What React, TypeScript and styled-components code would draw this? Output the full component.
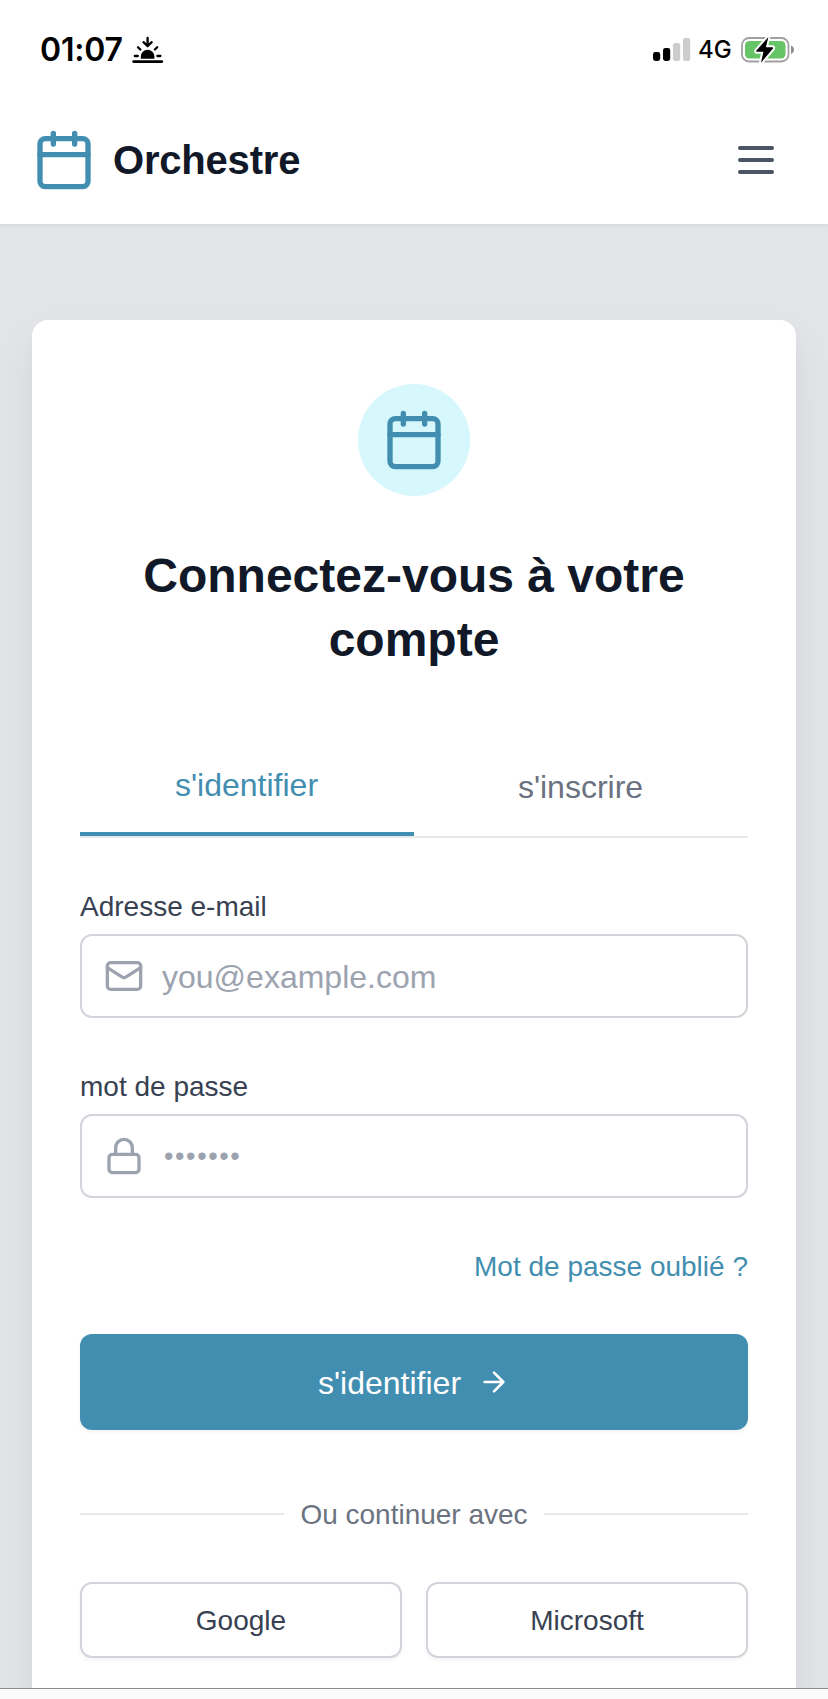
import React from "react";
import styled, { createGlobalStyle } from "styled-components";

const GlobalStyle = createGlobalStyle`
  *, *::before, *::after { box-sizing: border-box; }
  body {
    margin: 0;
    background: #e3e4e8;
    font-family: "Liberation Sans", Arial, sans-serif;
    color: #111827;
  }
  h1, label { margin: 0; }
  button, input { font-family: inherit; }
`;

const brand = "#428eb0";

const Screen = styled.div`
  display: flex;
  flex-direction: column;
  width: 828px;
  height: 1699px;
  overflow: hidden;
`;

const StatusBar = styled.div`
  display: flex;
  justify-content: space-between;
  height: 96px;
  padding: 30px 33px 26px 39px;
  background: #fff;
  color: #000;
  font-family: Inter, sans-serif;
`;

const StatusGroup = styled.div`
  display: flex;
  align-items: center;
  height: 40px;
`;

const Clock = styled.span`
  width: 93px;
  padding-left: 1px;
  font-size: 32px;
  font-weight: 600;
  line-height: 40px;
  letter-spacing: -0.2px;
  white-space: nowrap;
`;

const Network = styled.span`
  width: 43px;
  margin-left: 7px;
  font-size: 24px;
  font-weight: 500;
  line-height: 40px;
  white-space: nowrap;
`;

const Header = styled.header`
  position: relative;
  z-index: 1;
  display: flex;
  align-items: center;
  justify-content: space-between;
  height: 128px;
  flex: none;
  padding: 0 48px 0 32px;
  background: #fff;
  box-shadow: 0 2px 4px rgba(0, 0, 0, 0.05);
`;

const Brand = styled.div`
  display: flex;
  align-items: center;
  gap: 17px;
  font-size: 40px;
  font-weight: 700;
  line-height: 56px;
  letter-spacing: -0.2px;
`;

const MenuButton = styled.button`
  display: flex;
  padding: 0;
  border: 0;
  background: none;
  color: #4b5563;
`;

const Page = styled.main`
  flex: 1;
  min-height: 0;
  overflow: hidden;
  padding: 96px 32px 0;
`;

const Card = styled.section`
  height: 1500px;
  padding: 64px 48px;
  border-radius: 16px;
  background: #fff;
  box-shadow: 0 20px 50px -6px rgba(0, 0, 0, 0.08), 0 8px 20px -4px rgba(0, 0, 0, 0.03);
`;

const Emblem = styled.div`
  display: flex;
  align-items: center;
  justify-content: center;
  width: 112px;
  height: 112px;
  margin: 0 auto 48px;
  border-radius: 50%;
  background: #d6f8fd;
`;

const Title = styled.h1`
  font-size: 48px;
  font-weight: 700;
  line-height: 64px;
  text-align: center;
`;

const Tabs = styled.div`
  display: flex;
  margin: 64px 0 48px;
  border-bottom: 2px solid #e5e7eb;
`;

const Tab = styled.button<{ $active?: boolean }>`
  flex: 1;
  padding: 25px 1px 23px 0;
  border: 0;
  border-bottom: ${(p) => (p.$active ? `4px solid ${brand}` : "0")};
  background: none;
  color: ${(p) => (p.$active ? brand : "#6b7280")};
  font-size: 32px;
  line-height: 48px;
`;

const Field = styled.div`
  display: flex;
  flex-direction: column;
  gap: 7px;
  margin-bottom: 48px;
`;

const Label = styled.label`
  padding-top: 1px;
  color: #374151;
  font-size: 28px;
  line-height: 40px;
`;

const InputBox = styled.div`
  display: flex;
  align-items: center;
  gap: 18px;
  height: 84px;
  padding: 0 22px;
  border: 2px solid #d1d5db;
  border-radius: 12px;
  color: #9ca3af;
`;

const Input = styled.input`
  flex: 1;
  min-width: 0;
  height: 50px;
  padding: 2px 0 0;
  border: 0;
  outline: 0;
  background: none;
  color: #111827;
  font-size: 32px;

  &::placeholder {
    color: #9ca3af;
    opacity: 1;
  }
`;

const PasswordInput = styled(Input)`
  padding: 0 0 3px 2px;

  &::placeholder {
    font-size: 27px;
    letter-spacing: 1.6px;
  }
`;

const Forgot = styled.a`
  display: block;
  margin-bottom: 47px;
  padding-top: 1px;
  color: ${brand};
  font-size: 28px;
  line-height: 40px;
  text-align: right;
`;

const Submit = styled.button`
  display: flex;
  align-items: center;
  justify-content: center;
  gap: 17px;
  width: 100%;
  height: 96px;
  padding: 0;
  border: 0;
  border-radius: 12px;
  background: ${brand};
  box-shadow: 0 2px 4px rgba(0, 0, 0, 0.05);
  color: #fff;
  font-size: 32px;
  line-height: 48px;
`;

const SubmitText = styled.span`
  padding-top: 2px;
`;

const Divider = styled.div`
  display: flex;
  align-items: center;
  gap: 16px;
  height: 40px;
  margin: 64px 0 48px;
  color: #6b7280;
  font-size: 28px;

  &::before,
  &::after {
    content: "";
    flex: 1;
    height: 2px;
    background: #e5e7eb;
  }
`;

const DividerText = styled.span`
  padding-top: 2px;
  line-height: 38px;
`;

const Providers = styled.div`
  display: grid;
  grid-template-columns: 1fr 1fr;
  gap: 24px;
`;

const ProviderButton = styled.button`
  height: 76px;
  padding: 2px 0 0;
  border: 2px solid #d1d5db;
  border-radius: 12px;
  background: #fff;
  box-shadow: 0 2px 4px rgba(0, 0, 0, 0.05);
  color: #374151;
  font-size: 28px;
  line-height: 40px;
`;

const BrowserEdge = styled.footer`
  flex: none;
  height: 11px;
  border-top: 1px solid #8e8e91;
  background: #fbfbfb;
`;

const StrokeIcon = styled.svg`
  flex: none;
  display: block;
  fill: none;
  stroke: currentColor;
  stroke-width: 2;
  stroke-linecap: round;
  stroke-linejoin: round;
`;

const Glyph = styled.svg`
  flex: none;
  display: block;
`;

const CalendarIcon = () => (
  <StrokeIcon width="64" height="64" viewBox="0 0 24 24" color={brand}>
    <path d="M8 2v4M16 2v4M3 10h18" />
    <rect x="3" y="4" width="18" height="18" rx="2" />
  </StrokeIcon>
);

const SunsetGlyph = () => (
  <Glyph width="32" height="28" viewBox="0 0 32 28">
    <g fill="none" stroke="#000" strokeWidth="2.3" strokeLinecap="round" strokeLinejoin="round">
      <path d="M15.6 2v7.4M11.5 6.2l4.1 3.9 4.1-3.9M6 11.2l2.3 2.3M25.2 11.2l-2.3 2.3M2.8 20h3M25.4 20h3" />
      <path d="M1.6 25.6h28.2" strokeWidth="2.7" />
    </g>
    <path d="M8.8 22.8v-2.2a6.8 6.8 0 0 1 13.6 0v2.2z" />
  </Glyph>
);

const SignalGlyph = () => (
  <Glyph width="38" height="24" viewBox="0 0 38 24">
    <rect x="0" y="14" width="7.2" height="9" rx="2.4" />
    <rect x="10" y="10" width="7.2" height="13" rx="2.4" />
    <rect x="20" y="5" width="7.2" height="18" rx="2.2" fill="#ccc" />
    <rect x="30" y="0" width="7.2" height="23" rx="2.2" fill="#ccc" />
  </Glyph>
);

const BatteryGlyph = () => (
  <Glyph width="54" height="28" viewBox="0 0 54 28">
    <rect x="1" y="2" width="46.5" height="23.5" rx="7" fill="none" stroke="#a0a0a2" strokeWidth="1.8" />
    <rect x="4" y="5" width="40.5" height="17.5" rx="4.5" fill="#65c466" />
    <path d="M50 9.5c4 1.5 4 7 0 8.5z" fill="#8f8f92" />
    <path
      d="M27.4 .9 15.4 14.6q-.5 1.2.7 1.2h6.3L20 26.8 32 12.4q.5-1.2-.7-1.2h-6.4z"
      stroke="#fff"
      strokeWidth="4"
      strokeLinejoin="round"
      paintOrder="stroke"
    />
  </Glyph>
);

export default function App() {
  return (
    <Screen>
      <GlobalStyle />
      <StatusBar>
        <StatusGroup>
          <Clock>01:07</Clock>
          <SunsetGlyph />
        </StatusGroup>
        <StatusGroup>
          <SignalGlyph />
          <Network>4G</Network>
          <BatteryGlyph />
        </StatusGroup>
      </StatusBar>
      <Header>
        <Brand>
          <CalendarIcon />
          Orchestre
        </Brand>
        <MenuButton aria-label="Menu">
          <StrokeIcon width="48" height="48" viewBox="0 0 24 24">
            <path d="M4 6h16M4 12h16M4 18h16" />
          </StrokeIcon>
        </MenuButton>
      </Header>
      <Page>
        <Card>
          <Emblem>
            <CalendarIcon />
          </Emblem>
          <Title>Connectez-vous à votre compte</Title>
          <Tabs>
            <Tab $active>s'identifier</Tab>
            <Tab>s'inscrire</Tab>
          </Tabs>
          <Field>
            <Label htmlFor="email">Adresse e-mail</Label>
            <InputBox>
              <StrokeIcon width="40" height="40" viewBox="0 0 24 24">
                <rect x="2" y="4" width="20" height="16" rx="2" />
                <path d="m22 7-8.97 5.7a1.94 1.94 0 0 1-2.06 0L2 7" />
              </StrokeIcon>
              <Input id="email" type="email" placeholder="you@example.com" />
            </InputBox>
          </Field>
          <Field>
            <Label htmlFor="password">mot de passe</Label>
            <InputBox>
              <StrokeIcon width="40" height="40" viewBox="0 0 24 24">
                <rect x="3" y="11" width="18" height="11" rx="2" />
                <path d="M7 11V7a5 5 0 0 1 10 0v4" />
              </StrokeIcon>
              <PasswordInput id="password" type="password" placeholder="•••••••" />
            </InputBox>
          </Field>
          <Forgot>Mot de passe oublié ?</Forgot>
          <Submit>
            <SubmitText>s'identifier</SubmitText>
            <StrokeIcon width="32" height="32" viewBox="0 0 24 24">
              <path d="M5 12h14M12 5l7 7-7 7" />
            </StrokeIcon>
          </Submit>
          <Divider>
            <DividerText>Ou continuer avec</DividerText>
          </Divider>
          <Providers>
            <ProviderButton>Google</ProviderButton>
            <ProviderButton>Microsoft</ProviderButton>
          </Providers>
        </Card>
      </Page>
      <BrowserEdge />
    </Screen>
  );
}
